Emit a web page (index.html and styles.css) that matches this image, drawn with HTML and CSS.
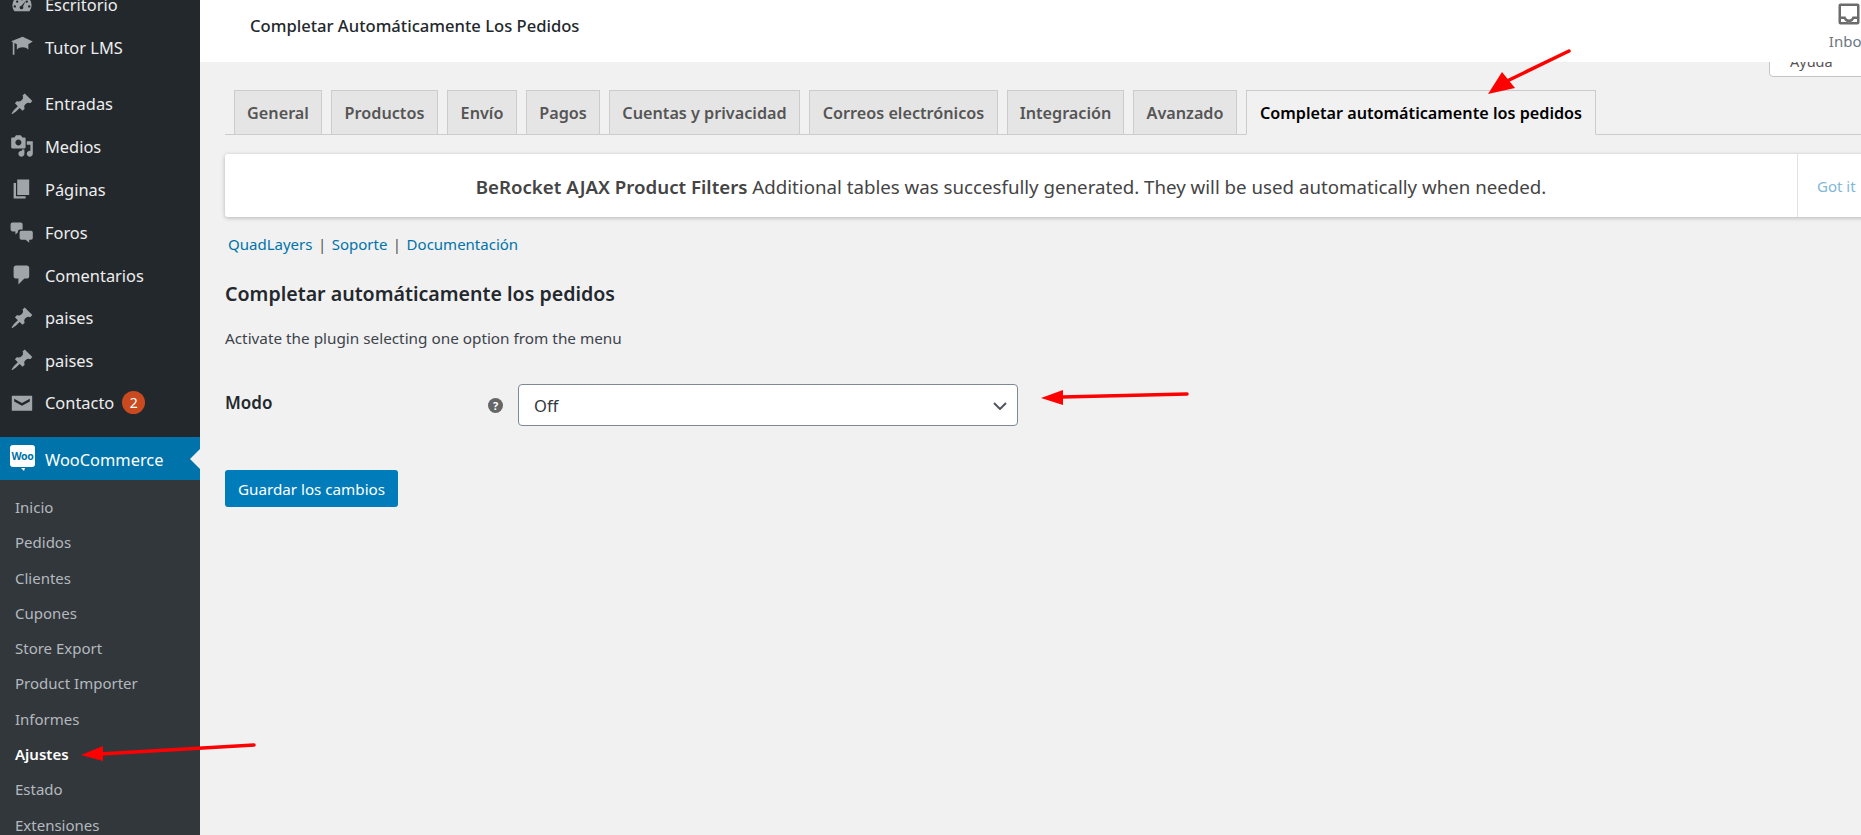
FILE: index.html
```html
<!DOCTYPE html>
<html lang="es">
<head>
<meta charset="utf-8">
<title>Completar Automáticamente Los Pedidos</title>
<link rel="stylesheet" href="styles.css">
</head>
<body>
<aside class="sidebar">
  <ul class="menu">
    <li class="item"><svg class="ico" viewBox="0 0 20 20"><path d="M3.76 16h12.48A7.97 7.97 0 0 0 18 11a8 8 0 0 0-16 0c0 1.9.66 3.64 1.76 5zM10 5a1 1 0 1 1 0 2 1 1 0 0 1 0-2zM6 7a1 1 0 1 1 0 2 1 1 0 0 1 0-2zm8 0a1 1 0 1 1 0 2 1 1 0 0 1 0-2zM4 11a1 1 0 1 1 0 2 1 1 0 0 1 0-2zm12 0a1 1 0 1 1 0 2 1 1 0 0 1 0-2zm-3-3.5-2.2 4.6a1.5 1.5 0 1 1-1.3-.7z" fill-rule="evenodd"/></svg>Escritorio</li>
    <li class="item"><svg class="ico" viewBox="0 0 20 20"><path d="M10.500 1.500 1 5.300l1.300.7v10.500h1.400V6.700l2 1v4.500c1.300-1.300 2.900-1.900 4.800-1.900s3.500.6 4.800 1.900V7.700l3.700-2.200z"/></svg>Tutor LMS</li>
    <li class="item sep"><svg class="ico" viewBox="0 0 20 20"><path d="M10.44 3.02l1.82-1.820 6.360 6.350-1.830 1.820c-1.050-.68-2.480-.57-3.410.36l-.75.75c-.92.93-1.040 2.350-.35 3.410l-1.830 1.820-2.410-2.410-2.800 2.790c-.42.42-3.380 2.710-3.800 2.290s1.860-3.390 2.280-3.810l2.790-2.790L4.100 9.360l1.830-1.820c1.050.69 2.480.57 3.400-.36l.75-.75c.93-.92 1.050-2.350.36-3.410z"/></svg>Entradas</li>
    <li class="item"><svg class="ico" viewBox="0 0 20 20"><path d="M13 11V4c0-.55-.45-1-1-1h-1.670L9 1H5L3.670 3H2c-.55 0-1 .45-1 1v7c0 .55.45 1 1 1h10c.55 0 1-.45 1-1zM7 4.500c1.380 0 2.500 1.120 2.500 2.500S8.380 9.500 7 9.500 4.500 8.380 4.500 7 5.620 4.500 7 4.500zM14 6h5v10.500c0 1.380-1.120 2.500-2.500 2.500S14 17.880 14 16.500s1.120-2.500 2.500-2.500c.17 0 .34.02.5.05V9h-3V6zm-4 8.050V13h2v3.500c0 1.380-1.120 2.500-2.500 2.500S7 17.880 7 16.500 8.120 14 9.500 14c.17 0 .34.02.5.05z"/></svg>Medios</li>
    <li class="item"><svg class="ico" viewBox="0 0 20 20"><path d="M6 15V2h10v13H6zm-1 1h8v2H3V5h2v11z"/></svg>Páginas</li>
    <li class="item"><svg class="ico" viewBox="0 0 20 20"><path d="M2 2h7a1.500 1.500 0 0 1 1.500 1.500V8H8.500a2 2 0 0 0-2 2v.5L4.500 12V9.500H2A1.500 1.500 0 0 1 .5 8V3.500A1.500 1.500 0 0 1 2 2zm7.500 7h8A1.500 1.500 0 0 1 19 10.500v4.500a1.500 1.500 0 0 1-1.500 1.500H16V19l-3-2.500H9.500A1.500 1.500 0 0 1 8 15v-4.500A1.500 1.500 0 0 1 9.500 9z"/></svg>Foros</li>
    <li class="item"><svg class="ico" viewBox="0 0 20 20"><path d="M5 2h9c1.100 0 2 .9 2 2v7c0 1.100-.9 2-2 2h-2l-5 5v-5H5c-1.100 0-2-.9-2-2V4c0-1.100.9-2 2-2z"/></svg>Comentarios</li>
    <li class="item"><svg class="ico" viewBox="0 0 20 20"><path d="M10.44 3.02l1.82-1.820 6.360 6.350-1.830 1.820c-1.050-.68-2.480-.57-3.410.36l-.75.75c-.92.93-1.040 2.350-.35 3.410l-1.830 1.820-2.410-2.410-2.800 2.790c-.42.42-3.380 2.710-3.800 2.290s1.860-3.390 2.280-3.810l2.790-2.790L4.100 9.360l1.830-1.820c1.050.69 2.480.57 3.400-.36l.75-.75c.93-.92 1.050-2.350.36-3.410z"/></svg>paises</li>
    <li class="item"><svg class="ico" viewBox="0 0 20 20"><path d="M10.44 3.02l1.82-1.820 6.360 6.350-1.830 1.820c-1.050-.68-2.480-.57-3.410.36l-.75.75c-.92.93-1.040 2.350-.35 3.410l-1.830 1.820-2.410-2.410-2.800 2.790c-.42.42-3.380 2.710-3.800 2.290s1.860-3.390 2.280-3.810l2.790-2.790L4.100 9.360l1.830-1.820c1.050.69 2.480.57 3.400-.36l.75-.75c.93-.92 1.050-2.350.36-3.410z"/></svg>paises</li>
    <li class="item item-contact"><svg class="ico" viewBox="0 0 20 20"><path d="M2 4h16a.5.5 0 0 1 .5.5V16a.5.5 0 0 1-.5.5H2a.5.5 0 0 1-.5-.5V4.500A.5.5 0 0 1 2 4zm14.500 2.500L10 10 3.500 6.500v2.200L10 12.300l6.500-3.600z" fill-rule="evenodd"/></svg>Contacto<span class="badge">2</span></li>
    <li class="item active">
      <span class="woo"><span class="woo-text">Woo</span></span>WooCommerce
    </li>
  </ul>
  <ul class="submenu">
    <li>Inicio</li>
    <li>Pedidos</li>
    <li>Clientes</li>
    <li>Cupones</li>
    <li>Store Export</li>
    <li>Product Importer</li>
    <li>Informes</li>
    <li class="current">Ajustes</li>
    <li>Estado</li>
    <li>Extensiones</li>
  </ul>
</aside>

<main class="main">
  <header class="topbar">
    <h1 class="page-title">Completar Automáticamente Los Pedidos</h1>
    <div class="inbox">
      <svg class="inbox-ico" viewBox="0 0 24 24"><path d="M3.500 1.500h17a2 2 0 0 1 2 2v17a2 2 0 0 1-2 2h-17a2 2 0 0 1-2-2v-17a2 2 0 0 1 2-2zm.5 2.500v10.500h4.500c.5 2 1.800 3 3.500 3s3-1 3.500-3H20V4zm0 13v3h16v-3h-3c-1 2.300-2.800 3.300-5 3.300S8 19.300 7 17z" fill-rule="evenodd"/></svg>
      <span>Inbox</span>
    </div>
  </header>
  <div class="help-tab">Ayuda</div>

  <div class="content">
    <nav class="tabs">
      <a class="tab w-general">General</a>
      <a class="tab w-productos">Productos</a>
      <a class="tab w-envio">Envío</a>
      <a class="tab w-pagos">Pagos</a>
      <a class="tab w-cuentas">Cuentas y privacidad</a>
      <a class="tab w-correos">Correos electrónicos</a>
      <a class="tab w-integ">Integración</a>
      <a class="tab w-avanz">Avanzado</a>
      <a class="tab tab-active w-comp">Completar automáticamente los pedidos</a>
    </nav>

    <div class="notice">
      <p class="notice-msg"><strong class="notice-strong">BeRocket AJAX Product Filters</strong> Additional tables was succesfully generated. They will be used automatically when needed.</p>
      <a class="notice-btn">Got it</a>
    </div>

    <p class="links"><a>QuadLayers</a><span class="pipe">|</span><a>Soporte</a><span class="pipe">|</span><a>Documentación</a></p>

    <h2 class="section-title">Completar automáticamente los pedidos</h2>
    <p class="section-desc">Activate the plugin selecting one option from the menu</p>

    <div class="form-row">
      <div class="form-label"><span class="form-name">Modo</span><span class="help-ico">?</span></div>
      <div class="select-wrap">
        <select class="select"><option>Off</option></select>
        <svg class="chev" viewBox="0 0 14 8"><path d="M1 1l6 6 6-6" fill="none" stroke="#50575e" stroke-width="2"/></svg>
      </div>
    </div>

    <button class="save" type="button">Guardar los cambios</button>
  </div>
</main>

<svg class="arrows" viewBox="0 0 1861 835">
  <path class="shaft" d="M1569 51 1505 82"/>
  <path class="head" d="M1488 94 1502 72 1515 88z"/>
  <path class="shaft" d="M1187 394 1062 397"/>
  <path class="head" d="M1041 398 1063 390 1063 405z"/>
  <path class="shaft" d="M254 745 100 754"/>
  <path class="head" d="M81 755 103 746 103 761z"/>
</svg>
</body>
</html>
```
FILE: styles.css
```css
* { box-sizing: border-box; }
html, body { margin: 0; height: 835px; overflow: hidden; }
body {
  display: flex;
  position: relative;
  font-family: "Noto Sans", "Open Sans", sans-serif;
  background: #f1f1f1;
  color: #3c434a;
}
ul { list-style: none; margin: 0; padding: 0; }

/* sidebar */
.sidebar { width: 200px; flex: none; height: 835px; background: #23282d; overflow: hidden; }
.menu { margin-top: -17px; }
.item {
  position: relative;
  display: flex;
  align-items: center;
  height: 42.8px;
  padding-left: 45px;
  font-size: 16.400px;
  color: #eee;
}
.item-contact { padding-bottom: 2px; }
.sep { margin-top: 14px; }
.ico { position: absolute; left: 10px; top: 9px; width: 24px; height: 24px; fill: #a0a5aa; }
.badge {
  display: flex; align-items: center; justify-content: center;
  width: 23px; height: 23px; margin-left: 8px;
  border-radius: 50%;
  background: #ca4a1f; color: #fff; font-size: 14px;
}
.active { height: 43px; margin-top: 12px; padding-top: 3px; background: #0073aa; color: #fff; }
.active::after {
  content: "";
  position: absolute; right: 0; top: 12px;
  border: 10px solid transparent; border-right-color: #f1f1f1; border-left-width: 0;
}
.woo {
  position: absolute; left: 10px; top: 8px;
  display: flex; align-items: center; justify-content: center;
  width: 25px; height: 22px;
  border-radius: 3px; background: #fff;
}
.woo::after {
  content: "";
  position: absolute; left: 11px; bottom: -4px;
  border: 3px solid transparent; border-top-color: #fff; border-right-width: 1px; border-bottom-width: 0;
}
.woo-text { font-size: 10.500px; font-weight: 700; color: #0073aa; letter-spacing: -.3px; }
.submenu { height: 400px; background: #32373c; padding-top: 9.400px; }
.submenu li {
  display: flex; align-items: center;
  height: 35.300px;
  padding-left: 15px;
  font-size: 15px;
  color: #b4b9be;
}
.submenu .current { color: #fff; font-weight: 600; }

/* main */
.main { position: relative; flex: 1; min-width: 0; height: 835px; overflow: hidden; }
.topbar {
  position: relative; z-index: 1;
  display: flex; justify-content: space-between;
  height: 62px; background: #fff;
}
.page-title { margin: 15px 0 0 50px; font-size: 16.600px; line-height: 22px; font-weight: 500; color: #23282d; }
.inbox {
  display: flex; flex-direction: column; align-items: center;
  flex: none; width: 40px; margin-right: -8px; padding-top: 2px;
  font-size: 15px; line-height: 20px; color: #6c7781;
}
.inbox-ico { width: 24px; height: 24px; fill: #6c6c6c; }
.inbox span { margin-top: 5px; }
.help-tab {
  position: absolute; left: 1569px; top: 40px;
  width: 120px; height: 37px;
  padding: 10px 0 0 20px;
  background: #fff;
  border: 1px solid #c3c4c7; border-radius: 0 0 4px 4px;
  font-size: 14.500px; line-height: 20px; color: #555;
}
.content { padding: 28px 0 0 25px; }
.tabs { display: flex; gap: 9px; height: 45px; padding-left: 9px; border-bottom: 1px solid #ccc; }
.tab {
  display: flex; align-items: center; justify-content: center;
  height: 45px;
  background: #e5e5e5;
  border: 1px solid #ccc;
  font-size: 16.200px; font-weight: 600; color: #555;
  white-space: nowrap;
}
.tab-active { background: #f1f1f1; border-bottom-color: #f1f1f1; color: #000; }
.w-general { width: 88px; }
.w-productos { width: 107px; }
.w-envio { width: 70px; }
.w-pagos { width: 74px; }
.w-cuentas { width: 191px; }
.w-correos { width: 189px; }
.w-integ { width: 117px; }
.w-avanz { width: 104px; }
.w-comp { width: 350px; }

.notice {
  display: flex;
  height: 63px; margin: 19px -10px 0 0;
  background: #fff;
  border-radius: 3px;
  box-shadow: 0 1px 4px rgba(0, 0, 0, .25);
}
.notice-msg {
  flex: none; width: 1572px; margin: 0; padding-top: 1px;
  align-self: center;
  text-align: center;
  font-size: 18.700px; color: #444;
}
.notice-strong { font-weight: 600; }
.notice-btn {
  flex: 1; padding-left: 19px;
  display: flex; align-items: center;
  border-left: 1px solid #e2e2e2;
  font-size: 15px; color: #7fb8d8;
}
.links { margin: 17px 0 0 3px; font-size: 15px; line-height: 20px; color: #0073aa; }
.pipe { margin: 0 5.500px; color: #555; }
.section-title { margin: 27px 0 0; font-size: 19.600px; line-height: 26px; font-weight: 600; color: #23282d; }
.section-desc { margin: 21px 0 0; font-size: 15.300px; line-height: 20px; color: #3c434a; }
.form-row { display: flex; align-items: center; margin-top: 36px; }
.form-label {
  display: flex; align-items: center; justify-content: space-between;
  flex: none; width: 293px; padding-right: 15px;
  font-size: 17px; font-weight: 600; color: #23282d;
}
.form-name { margin-top: -5px; }
.help-ico {
  display: flex; align-items: center; justify-content: center;
  width: 15px; height: 15px; border-radius: 50%;
  background: #666; color: #fff; font-size: 11px; font-weight: 700;
}
.select-wrap { position: relative; width: 500px; height: 42px; }
.select {
  display: block; width: 100%; height: 100%;
  padding: 0 30px 0 15px;
  appearance: none;
  background: #fff;
  border: 1px solid #7e8993; border-radius: 4px;
  font: 16.500px "Noto Sans", "Open Sans", sans-serif; color: #32373c;
}
.chev { position: absolute; right: 11px; top: 18px; width: 14px; height: 8px; }
.save {
  display: block;
  width: 173px; height: 37px; margin-top: 44px; padding: 0;
  background: #007cba;
  border: 0; border-radius: 3px;
  font: 15.200px "Noto Sans", "Open Sans", sans-serif; color: #fff;
}

/* annotation arrows */
.arrows { position: absolute; left: 0; top: 0; width: 1861px; height: 835px; pointer-events: none; z-index: 5; }
.shaft { fill: none; stroke: #f00; stroke-width: 3.500; stroke-linecap: round; }
.head { fill: #f00; }
```
